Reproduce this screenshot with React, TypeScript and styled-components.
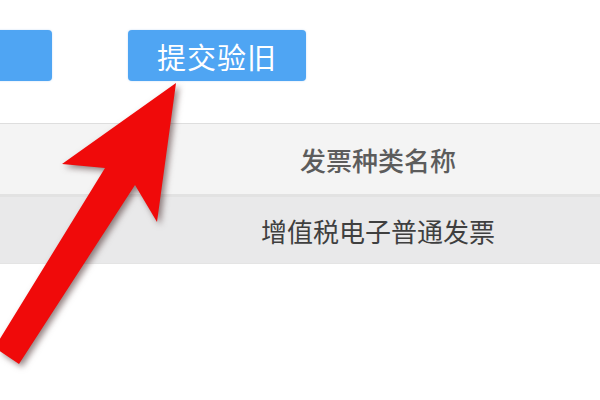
import React from "react"
import styled, {createGlobalStyle} from "styled-components"

const GlobalStyle = createGlobalStyle`
  html, body {
    margin: 0;
    padding: 0;
    background: #ffffff;
    font-family: "Microsoft YaHei", "Noto Sans CJK SC", "Noto Sans", sans-serif;
  }
`

const StyledPage = styled.div`
  position: relative;
  width: 600px;
  height: 400px;
  overflow: hidden;
  background: #ffffff;
`

const StyledToolbar = styled.div`
  display: flex;
  align-items: center;
  gap: 76px;
  padding-top: 30px;
  margin-left: -126px;
  height: 51px;
`

const StyledButton = styled.button`
  width: 178px;
  height: 51px;
  border: none;
  border-radius: 4px;
  background: #4fa5f3;
  color: #ffffff;
  font-family: inherit;
  font-size: 29px;
  letter-spacing: 1px;
  padding: 0;
  display: flex;
  align-items: center;
  justify-content: center;
  box-shadow: 0 0 2px rgba(80, 150, 220, 0.35);
`

const StyledTable = styled.div`
  margin-top: 42px;
  border-top: 1px solid #dedede;
`

const StyledRow = styled.div<{ $header?: boolean }>`
  display: flex;
  align-items: center;
  justify-content: center;
  padding-left: 156px;
  height: ${p => p.$header ? "70px" : "66px"};
  background: ${p => p.$header ? "#f4f4f4" : "#e9e9ea"};
  border-bottom: ${p => p.$header ? "3px solid #e2e2e2" : "1px solid #e4e4e4"};
  color: ${p => p.$header ? "#5c5c5c" : "#3f3f3f"};
  font-size: 26px;
  font-weight: ${p => p.$header ? 500 : 400};
`

const StyledArrow = styled.svg`
  position: absolute;
  left: 0;
  top: 0;
  filter: drop-shadow(3px 3px 3px rgba(60, 30, 30, 0.55));
`

const Arrow: React.FC = () => (
    <StyledArrow width={600} height={400} viewBox="0 0 600 400">
        <path
            d="M176 83 L62 164 L105 168 L-2 342 L-8 346 L19 364 L135 185 L157 222 Z"
            fill="#f00a0a"
        />
    </StyledArrow>
)

const App: React.FC = () => {
    return (
        <StyledPage>
            <GlobalStyle/>
            <StyledToolbar>
                <StyledButton aria-label="查询"/>
                <StyledButton>提交验旧</StyledButton>
            </StyledToolbar>
            <StyledTable>
                <StyledRow $header>发票种类名称</StyledRow>
                <StyledRow>增值税电子普通发票</StyledRow>
            </StyledTable>
            <Arrow/>
        </StyledPage>
    )
}

export default App
